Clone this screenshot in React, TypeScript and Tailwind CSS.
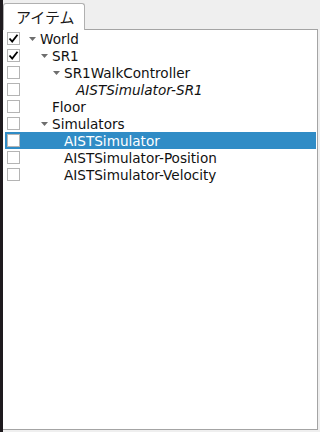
const rows: { label: string; depth: number; arrow?: boolean; checked?: boolean; italic?: boolean; selected?: boolean }[] = [
  { label: "World", depth: 0, arrow: true, checked: true },
  { label: "SR1", depth: 1, arrow: true, checked: true },
  { label: "SR1WalkController", depth: 2, arrow: true },
  { label: "AISTSimulator-SR1", depth: 3, italic: true },
  { label: "Floor", depth: 1 },
  { label: "Simulators", depth: 1, arrow: true },
  { label: "AISTSimulator", depth: 2, selected: true },
  { label: "AISTSimulator-Position", depth: 2 },
  { label: "AISTSimulator-Velocity", depth: 2 },
];

function Arrow() {
  return (
    <svg width="7" height="4" viewBox="0 0 7 4">
      <path d="M0 0 L7 0 L3.5 4 Z" fill="#6e6e6e" />
    </svg>
  );
}

function Check({ checked }: { checked?: boolean }) {
  return (
    <div className="w-[13px] h-[13px] border border-[#b4b4b4] bg-white flex items-center justify-center shrink-0">
      {checked && (
        <svg width="11" height="11" viewBox="0 0 11 11">
          <path d="M1.5 5.5 L4.2 8.6 L9.5 1.8" stroke="#000" strokeWidth="1.8" fill="none" />
        </svg>
      )}
    </div>
  );
}

export default function App() {
  return (
    <main className="w-[320px] h-[432px] bg-[#efefef] flex" style={{ fontFamily: '"DejaVu Sans", "Noto Sans CJK JP", sans-serif' }}>
      {/* dark edge */}
      <div className="w-[3px] h-full bg-[#1e1a1e]" />
      <div className="flex-1 flex flex-col mr-[2px] mb-[2px]">
        {/* tab bar */}
        <div className="h-[29px] flex items-end">
          <div className="relative z-10 -mb-px h-[27px] w-[82px] bg-white border-l border-t border-r border-[#b0b0b0] rounded-t-[3px] flex items-center pl-[12px] text-[15px] text-[#1a1a1a]" style={{ fontFamily: '"Noto Sans CJK JP", sans-serif' }}>
            アイテム
          </div>
        </div>
        {/* panel */}
        <div className="flex-1 bg-white border-t border-r border-b border-[#a4a4a4]">
          {rows.map((r) => (
            <div
              key={r.label}
              className={`h-[17px] ml-[2px] mr-[1px] pl-[2px] flex items-center text-[13.6px] ${r.selected ? "bg-[#308cc6] text-white" : "text-[#111]"}`}
            >
              <Check checked={r.checked} />
              <div className="w-[6px] shrink-0" />
              <div className="shrink-0" style={{ width: r.depth * 12 }} />
              <div className="w-[12px] shrink-0 flex items-center justify-center">{r.arrow && <Arrow />}</div>
              <span className={`ml-[2px] pt-[2px] h-[17px] whitespace-nowrap leading-[15px] ${r.italic ? "italic" : ""}`}>{r.label}</span>
            </div>
          ))}
        </div>
      </div>
    </main>
  );
}
